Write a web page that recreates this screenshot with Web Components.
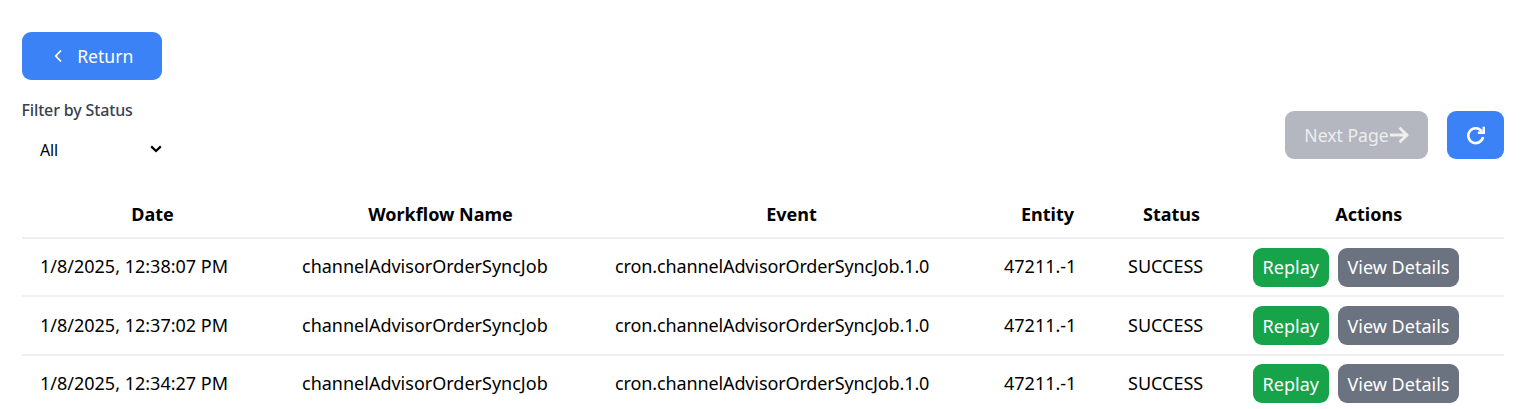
<!DOCTYPE html>
<html lang="en">
<head>
<meta charset="utf-8">
<title>Workflow runs</title>
<style>
  html, body { margin: 0; background: #fff; }
  body { font-family: "Noto Sans", "Open Sans", sans-serif; color: #000; }
</style>
</head>
<body>
<runs-page></runs-page>

<script>
class UiButton extends HTMLElement {
  constructor () {
    super();
    this.shadowDOM = this.attachShadow({mode: 'open'});
  }

  connectedCallback () {
    this.shadowDOM.innerHTML = `
    <style>
      :host {
        display: inline-flex;
        align-items: center;
        justify-content: center;
        box-sizing: border-box;
        height: var(--btn-height, 48px);
        padding: var(--btn-padding, 0 16px);
        gap: var(--btn-gap, 0);
        border-radius: var(--btn-radius, 9px);
        background: var(--btn-bg, #3b82f6);
        color: #fff;
        font-size: var(--btn-size, 17.6px);
        white-space: nowrap;
      }
      :host([color="green"]) { background: #16a34a; }
      :host([color="gray"]) { background: #6b7280; }
      :host([disabled]) { background: #b4b7bf; color: #eceef0; }
    </style>
    <slot></slot>
    `;
  }
}

class StatusFilter extends HTMLElement {
  constructor () {
    super();
    this.shadowDOM = this.attachShadow({mode: 'open'});
  }

  connectedCallback () {
    this.shadowDOM.innerHTML = `
    <style>
      :host {
        display: flex;
        flex-direction: column;
        width: 143px;
      }
      label {
        font-size: 16px;
        font-weight: 500;
        line-height: 20px;
        color: #374151;
        letter-spacing: -0.15px;
      }
      .select {
        display: flex;
        align-items: center;
        justify-content: space-between;
        height: 40px;
        margin-top: 10px;
        padding: 0 3px 0 18.5px;
        font-size: 16px;
        letter-spacing: -0.2px;
      }
      svg { width: 12px; height: 8px; margin-bottom: 3px; }
    </style>
    <label>Filter by Status</label>
    <div class="select">
      <span>All</span>
      <svg viewBox="0 0 12 8"><path d="M1.2 1.4 6 6l4.8-4.6" fill="none" stroke="#000" stroke-width="2.2"/></svg>
    </div>
    `;
  }
}

class RunRow extends HTMLElement {
  constructor () {
    super();
    this.shadowDOM = this.attachShadow({mode: 'open'});
  }

  connectedCallback () {
    const d = this.dataset;
    this.shadowDOM.innerHTML = `
    <style>
      :host {
        display: grid;
        grid-template-columns: var(--run-cols);
        align-items: center;
        box-sizing: border-box;
        height: 58.4px;
        border-top: 2px solid #eeeff2;
        font-size: 18px;
      }
      .cell { padding: 0 0 2px 18.5px; white-space: nowrap; }
      .event { padding-left: 17.5px; letter-spacing: -0.12px; }
      .actions {
        display: flex;
        gap: 9px;
        padding-left: 19.5px;
        --btn-height: 39px;
        --btn-padding: 0 10px;
        --btn-radius: 9px;
        --btn-size: 18px;
      }
      .replay { --btn-padding: 0 9.6px; }
    </style>
    <div class="cell">${d.date}</div>
    <div class="cell">${d.workflow}</div>
    <div class="cell event">${d.event}</div>
    <div class="cell">${d.entity}</div>
    <div class="cell">${d.status}</div>
    <div class="actions">
      <ui-button class="replay" color="green">Replay</ui-button>
      <ui-button color="gray">View Details</ui-button>
    </div>
    `;
  }
}

class RunsTable extends HTMLElement {
  constructor () {
    super();
    this.shadowDOM = this.attachShadow({mode: 'open'});
  }

  connectedCallback () {
    const times = ['12:38:07', '12:37:02', '12:34:27'];
    const rows = times.map(t => `
      <run-row
        data-date="1/8/2025, ${t} PM"
        data-workflow="channelAdvisorOrderSyncJob"
        data-event="cron.channelAdvisorOrderSyncJob.1.0"
        data-entity="47211.-1"
        data-status="SUCCESS"></run-row>`).join('');
    this.shadowDOM.innerHTML = `
    <style>
      :host {
        display: block;
        --run-cols: 262px 314px 388px 124px 124px 270.5px;
      }
      .head {
        display: grid;
        grid-template-columns: var(--run-cols);
        align-items: center;
        height: 46px;
        padding-bottom: 1px;
        box-sizing: border-box;
        font-size: 18px;
        font-weight: 700;
        text-align: center;
      }
    </style>
    <div class="head">
      <div>Date</div>
      <div>Workflow Name</div>
      <div>Event</div>
      <div>Entity</div>
      <div>Status</div>
      <div>Actions</div>
    </div>
    ${rows}
    `;
  }
}

class RunsPage extends HTMLElement {
  constructor () {
    super();
    this.shadowDOM = this.attachShadow({mode: 'open'});
  }

  connectedCallback () {
    this.shadowDOM.innerHTML = `
    <style>
      :host {
        display: block;
        box-sizing: border-box;
        height: 409px;
        padding: 32px 27px 0 21.5px;
        overflow: hidden;
      }
      .return { width: 140.5px; --btn-padding: 0 0 0 4px; --btn-gap: 14px; }
      .toolbar {
        display: flex;
        align-items: flex-start;
        justify-content: space-between;
        margin-top: 20px;
        height: 91px;
      }
      .pager {
        display: flex;
        gap: 19px;
        margin-top: 11px;
      }
      .next { width: 143px; --btn-padding: 0; }
      .refresh { width: 57px; --btn-padding: 0; }
      svg { display: block; }
    </style>
    <ui-button class="return">
      <svg width="9" height="14" viewBox="0 0 9 14"><path d="M7 1.5 1.8 7 7 12.5" fill="none" stroke="#fff" stroke-width="1.8"/></svg>
      <span>Return</span>
    </ui-button>
    <div class="toolbar">
      <status-filter></status-filter>
      <div class="pager">
        <ui-button class="next" disabled>
          <span>Next Page</span>
          <svg width="20" height="18" viewBox="0 0 20 18"><path d="M1 9h17M10.500 1.800 18 9l-7.500 7.200" fill="none" stroke="#eceef0" stroke-width="2.800"/></svg>
        </ui-button>
        <ui-button class="refresh">
          <svg width="20" height="20" viewBox="0 0 20 20"><path d="M15.800 6.400A7.400 7.400 0 1 0 17 12" fill="none" stroke="#fff" stroke-width="2.600"/><path d="M17.800 1.800v6h-6" fill="none" stroke="#fff" stroke-width="2.400"/></svg>
        </ui-button>
      </div>
    </div>
    <runs-table></runs-table>
    `;
  }
}

customElements.define('ui-button', UiButton);
customElements.define('status-filter', StatusFilter);
customElements.define('run-row', RunRow);
customElements.define('runs-table', RunsTable);
customElements.define('runs-page', RunsPage);
</script>
</body>
</html>
